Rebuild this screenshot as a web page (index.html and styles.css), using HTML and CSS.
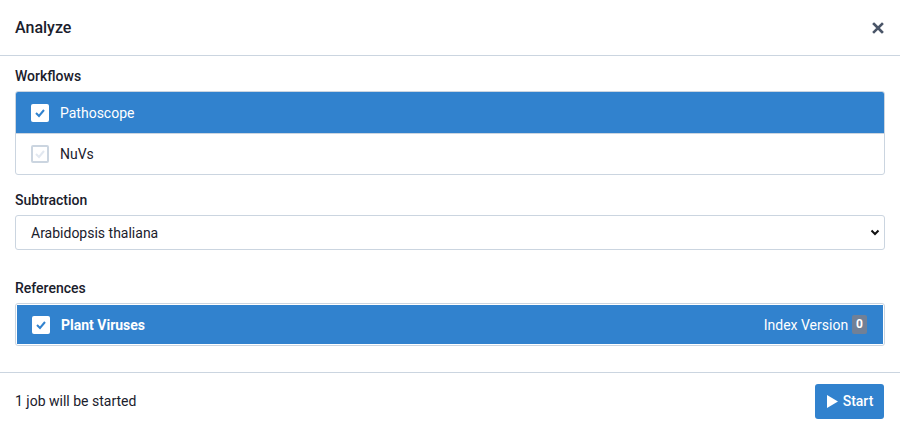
FILE: index.html
```html
<html>
  <head>
    <link rel="stylesheet" href="styles.css">
  </head>
  <body>
    <div class="modal">
      <div class="modal-header">
        <span>Analyze</span>
        <svg class="close" width="12" height="12" viewBox="0 0 12 12">
          <path d="M2 2 L10 10 M10 2 L2 10" stroke="#4a5568" stroke-width="2.6" stroke-linecap="square"/>
        </svg>
      </div>
      <div class="modal-body">
        <label class="field-label">Workflows</label>
        <ul class="list">
          <li class="list-item active">
            <span class="checkbox checked">
              <svg width="12" height="10" viewBox="0 0 12 10"><path d="M2 5 L5 8 L10 2" fill="none" stroke="#3182ce" stroke-width="2"/></svg>
            </span>
            Pathoscope
          </li>
          <li class="list-item">
            <span class="checkbox">
              <svg width="12" height="10" viewBox="0 0 12 10"><path d="M2 5 L5 8 L10 2" fill="none" stroke="#e2e8f0" stroke-width="2"/></svg>
            </span>
            NuVs
          </li>
        </ul>

        <label class="field-label">Subtraction</label>
        <div class="select">
          <span>Arabidopsis thaliana</span>
          <svg width="10" height="7" viewBox="0 0 10 7"><path d="M1.5 1.5 L5 5 L8.5 1.5" fill="none" stroke="#111" stroke-width="2"/></svg>
        </div>

        <label class="field-label refs">References</label>
        <div class="ref-box">
          <div class="ref-item">
            <span class="checkbox checked">
              <svg width="12" height="10" viewBox="0 0 12 10"><path d="M2 5 L5 8 L10 2" fill="none" stroke="#3182ce" stroke-width="2"/></svg>
            </span>
            <strong>Plant Viruses</strong>
            <span class="index">Index Version <span class="badge">0</span></span>
          </div>
        </div>
      </div>
      <div class="modal-footer">
        <span>1 job will be started</span>
        <button class="btn">
          <svg width="13" height="15" viewBox="0 0 13 15"><path d="M1 1 L12 7.5 L1 14 Z" fill="#fff"/></svg>
          Start
        </button>
      </div>
    </div>
  </body>
</html>
```
FILE: styles.css
```css
body {
  margin: 0;
  background: #fff;
  font-family: Roboto, "Liberation Sans", sans-serif;
  font-size: 14px;
  color: #1a202c;
}

.modal {
  width: 900px;
  height: 429px;
  display: flex;
  flex-direction: column;
}

.modal-header {
  height: 55px;
  display: flex;
  align-items: center;
  justify-content: space-between;
  padding: 0 15px;
  border-bottom: 1px solid #cbd5e0;
  font-size: 16px;
  font-weight: 500;
}

.close {
  margin-right: 1px;
}

.modal-body {
  padding: 10px 15px 26px;
  display: flex;
  flex-direction: column;
}

.field-label {
  display: block;
  font-weight: 500;
  line-height: 20px;
  margin-bottom: 5px;
}

.list {
  list-style: none;
  margin: 0 0 15px;
  padding: 0;
  border: 1px solid #cbd5e0;
  border-radius: 3px;
  overflow: hidden;
}

.list-item {
  height: 40px;
  display: flex;
  align-items: center;
  padding: 0 15px;
  gap: 11px;
}

.list-item + .list-item {
  border-top: 1px solid #cbd5e0;
}

.list-item.active {
  background: #3182ce;
  color: #fff;
  height: 41px;
}

.checkbox {
  width: 18px;
  height: 18px;
  box-sizing: border-box;
  border-radius: 2px;
  display: flex;
  align-items: center;
  justify-content: center;
  border: 2px solid #cbd5e0;
  background: #fff;
}

.checkbox.checked {
  border: none;
}

.select {
  height: 35px;
  box-sizing: border-box;
  border: 1px solid #cbd5e0;
  border-radius: 3px;
  display: flex;
  align-items: center;
  justify-content: space-between;
  padding: 0 4px 0 15px;
}

.refs {
  margin-top: 28px;
}

.ref-box {
  border: 1px solid #cbd5e0;
  border-radius: 3px;
  padding: 1px;
}

.ref-item {
  height: 39px;
  background: #3182ce;
  color: #fff;
  display: flex;
  align-items: center;
  padding: 0 16px 0 15px;
  gap: 11px;
}

.index {
  margin-left: auto;
  display: flex;
  align-items: center;
  gap: 4px;
}

.badge {
  background: #718096;
  color: #fff;
  font-weight: 700;
  font-size: 12px;
  padding: 0 4px;
  line-height: 19px;
  border-radius: 2px;
}

.modal-footer {
  flex: 1;
  border-top: 1px solid #cbd5e0;
  display: flex;
  align-items: center;
  justify-content: space-between;
  padding: 0 16px 0 15px;
}

.btn {
  height: 35px;
  width: 69px;
  border: none;
  border-radius: 3px;
  background: #3182ce;
  color: #fff;
  font-family: inherit;
  font-size: 14px;
  font-weight: 500;
  display: flex;
  align-items: center;
  justify-content: center;
  gap: 4px;
  padding: 0;
}
```
